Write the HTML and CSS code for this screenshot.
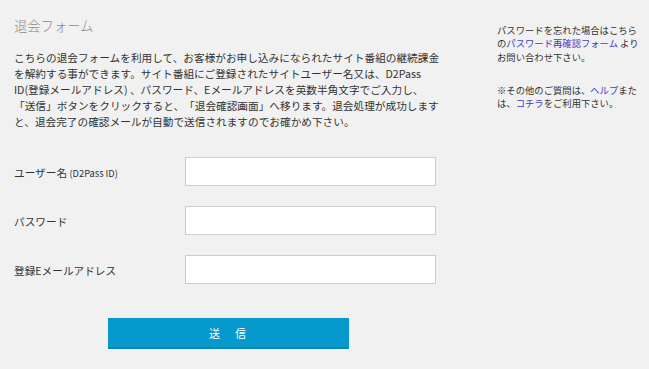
FILE: index.html
```html
<!DOCTYPE html>
<html lang="ja">
<head>
<meta charset="utf-8">
<title>退会フォーム</title>
<link rel="stylesheet" href="styles.css">
</head>
<body>
<div class="page">
  <div class="main">
    <h1 class="title">退会フォーム</h1>
    <p class="intro">こちらの退会フォームを利用して、お客様がお申し込みになられたサイト番組の継続課金<br>を解約する事ができます。サイト番組にご登録されたサイトユーザー名又は、D2Pass<br>ID(登録メールアドレス) 、パスワード、Eメールアドレスを英数半角文字でご入力し、<br>「送信」ボタンをクリックすると、「退会確認画面」へ移ります。退会処理が成功します<br>と、退会完了の確認メールが自動で送信されますのでお確かめ下さい。</p>
    <form class="form">
      <div class="row">
        <label class="label">ユーザー名 <span class="small">(D2Pass ID)</span></label>
        <input class="field" type="text">
      </div>
      <div class="row">
        <label class="label">パスワード</label>
        <input class="field" type="password">
      </div>
      <div class="row">
        <label class="label">登録Eメールアドレス</label>
        <input class="field" type="text">
      </div>
      <div class="actions">
        <button class="submit" type="button">送　信</button>
      </div>
    </form>
  </div>
  <div class="side">
    <p class="note">パスワードを忘れた場合はこちら<br>の<a class="link" href="#">パスワード再確認フォーム</a> より<br>お問い合わせ下さい。</p>
    <p class="note">※その他のご質問は、<a class="link" href="#">ヘルプ</a>また<br>は、<a class="link" href="#">コチラ</a>をご利用下さい。</p>
  </div>
</div>
</body>
</html>
```

FILE: styles.css
```css
html, body {
  margin: 0;
  padding: 0;
  background: #f1f1f1;
}
body {
  font-family: "Noto Sans CJK JP", "Noto Sans", sans-serif;
  color: #333333;
  text-spacing-trim: space-all;
}
.page {
  display: flex;
  padding: 17px 0 0 14px;
}
.main {
  width: 440px;
}
.title {
  margin: 0;
  font-size: 13.3px;
  line-height: 18px;
  font-weight: 300;
  color: #8a8a8a;
}
.intro {
  margin: 15px 0 0;
  font-size: 10.67px;
  line-height: 16px;
  white-space: nowrap;
}
.form {
  margin-top: 27px;
  display: flex;
  flex-direction: column;
  gap: 20px;
}
.row {
  display: flex;
  align-items: center;
}
.label {
  width: 171px;
  font-size: 10.67px;
  line-height: 16px;
  padding-top: 2px;
}
.small {
  font-size: 9.3px;
}
.field {
  box-sizing: border-box;
  width: 251px;
  height: 29px;
  margin: 0;
  border: 1px solid #cccccc;
  background: #ffffff;
  padding: 0 6px;
}
.actions {
  padding: 14px 0 0 94px;
}
.submit {
  width: 241px;
  height: 31px;
  border: 0;
  border-bottom: 2px solid #0a86b3;
  background: #0599cc;
  color: #ffffff;
  font-family: inherit;
  font-size: 11px;
  font-weight: normal;
  letter-spacing: 2px;
  padding: 0;
}
.side {
  margin-left: 43px;
  width: 150px;
  padding-top: 7px;
}
.note {
  margin: 0 0 20px;
  font-size: 9.33px;
  line-height: 13.3px;
  white-space: nowrap;
}
.link {
  color: #3b3bc8;
  text-decoration: none;
}
```
